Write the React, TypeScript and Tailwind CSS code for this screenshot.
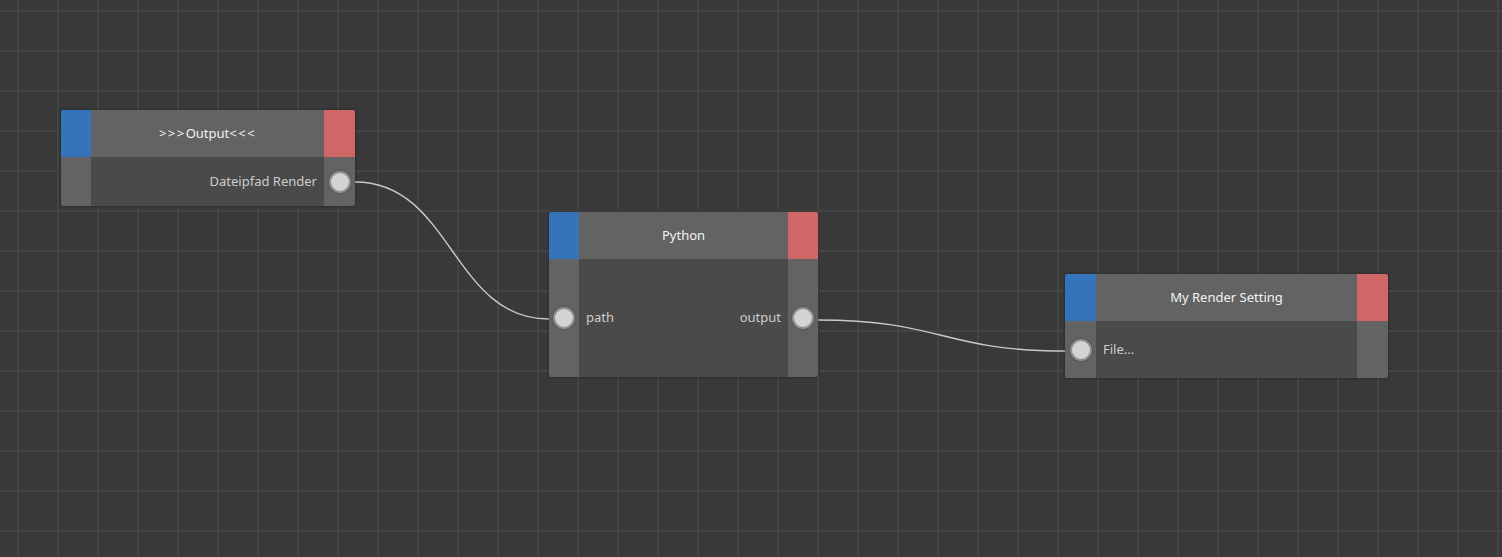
import React from 'react';

type NodeProps = {
    x: number;
    y: number;
    width: number;
    bodyHeight: number;
    title: React.ReactNode;
    leftW?: number;
    rightW?: number;
    input?: string;
    output?: string;
};

const Port: React.FC = () => (
    <div className="w-[22px] h-[22px] rounded-full bg-[#d3d3d3] border-2 border-[#8f8f8f] shadow-[0_0_2px_rgba(0,0,0,0.4)]" />
);

const Node: React.FC<NodeProps> = ({ x, y, width, bodyHeight, title, leftW = 30, rightW = 30, input, output }) => {
    return (
        <div
            className="absolute flex flex-col rounded-[2px] overflow-hidden shadow-[0_0_3px_rgba(0,0,0,0.45)]"
            style={{ left: x, top: y, width }}
        >
            {/* Header */}
            <div className="flex h-[47px]">
                <div className="bg-[#3574ba]" style={{ width: leftW }} />
                <div className="flex-1 bg-[#636363] flex items-center justify-center text-[13px] text-[#f3f3f3]">
                    {title}
                </div>
                <div className="bg-[#d06666]" style={{ width: rightW }} />
            </div>

            {/* Body */}
            <div className="flex" style={{ height: bodyHeight }}>
                <div className="bg-[#636363] flex items-center justify-center" style={{ width: leftW }}>
                    {input !== undefined && <Port />}
                </div>
                <div className="flex-1 bg-[#4a4a4a] flex items-center justify-between text-[13px] text-[#cdcdcd]">
                    <span className="pl-[7px]">{input}</span>
                    <span className="pr-[7px]">{output}</span>
                </div>
                <div className="bg-[#636363] flex items-center justify-center" style={{ width: rightW }}>
                    {output !== undefined && <Port />}
                </div>
            </div>
        </div>
    );
};

export default function App() {
    return (
        <div
            className="relative w-[1502px] h-[557px] overflow-hidden bg-[#393939] bg-[linear-gradient(to_right,#444444_2px,transparent_2px),linear-gradient(to_bottom,#444444_2px,transparent_2px)] bg-[size:40px_40px] bg-[position:17px_10px]"
            style={{ fontFamily: '"Noto Sans", "Open Sans", sans-serif' }}
        >
            {/* Wires */}
            <svg className="absolute inset-0" width="1502" height="557">
                <path d="M 355 182 C 452 182, 452 319, 549 319" fill="none" stroke="#c9c9c9" strokeWidth="1.4" />
                <path d="M 818 320 C 942 320, 942 351, 1065 351" fill="none" stroke="#c9c9c9" strokeWidth="1.4" />
            </svg>

            <Node
                x={61}
                y={110}
                width={294}
                bodyHeight={49}
                title={
                    <span>
                        <span className="tracking-[1.5px]">&gt;&gt;&gt;</span>Output<span className="tracking-[1.5px]">&lt;&lt;&lt;</span>
                    </span>
                }
                rightW={31}
                output="Dateipfad Render"
            />
            <Node x={549} y={212} width={269} bodyHeight={118} title="Python" input="path" output="output" />
            <Node x={1065} y={274} width={323} bodyHeight={57} title="My Render Setting" leftW={31} rightW={31} input="File..." />
        </div>
    );
}
